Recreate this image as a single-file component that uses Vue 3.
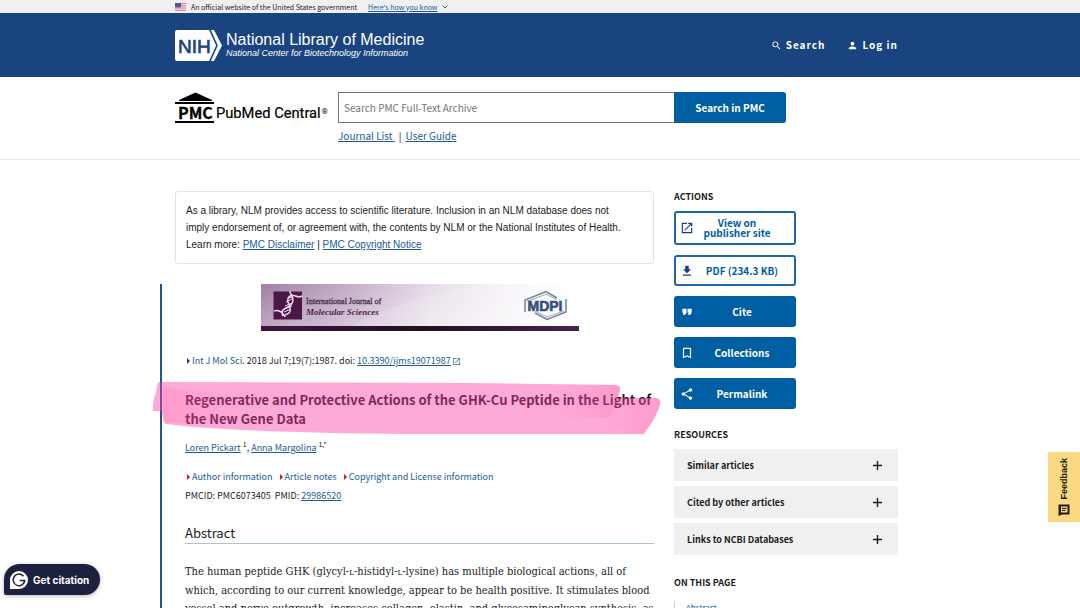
<script setup>
const articleTools = ['Author information', 'Article notes', 'Copyright and License information']
const resources = ['Similar articles', 'Cited by other articles', 'Links to NCBI Databases']
</script>

<template>
  <div class="page">
    <div class="gov">
      <div class="wrap gov-row">
        <svg class="flag" viewBox="0 0 11 8" aria-hidden="true">
          <rect width="11" height="8" fill="#f3dcdf" />
          <path d="M0 .6H11M0 2.8H11M0 5H11M0 7.3H11" stroke="#dd7686" stroke-width="1" />
          <rect width="6" height="4.4" fill="#4c5c9c" />
        </svg>
        <span>An official website of the United States government</span>
        <a href="#" class="know">Here's how you know</a>
        <svg class="chev" viewBox="0 0 6 4" aria-hidden="true"><path d="M.6 .6L3 3L5.4 .6" fill="none" stroke="#2c5f95" stroke-width="1" /></svg>
      </div>
    </div>

    <header class="nlm">
      <div class="wrap nlm-row">
        <a href="#" class="brand">
          <svg class="nih" viewBox="0 0 47 31" aria-label="NIH">
            <path d="M2 0H39L47 15.500L39 31H2Q0 31 0 29V2Q0 0 2 0Z" fill="#fff" />
            <path d="M34.500 -1L42 15.500L34.500 32" fill="none" stroke="#1a4480" stroke-width="1.600" />
            <text x="3" y="22.500" font-family="Liberation Sans, Arial, sans-serif" font-size="19" fill="#1a4480" stroke="#1a4480" stroke-width=".7">NIH</text>
          </svg>
          <span class="brand-text">
            <span class="brand-name">National Library of Medicine</span>
            <span class="brand-sub">National Center for Biotechnology Information</span>
          </span>
        </a>
        <nav class="user">
          <a href="#"><svg viewBox="0 0 24 24" class="ic"><path d="M15.500 14h-.79l-.28-.27A6.471 6.471 0 0 0 16 9.500 6.500 6.500 0 1 0 9.500 16c1.610 0 3.090-.59 4.230-1.570l.27.28v.79l5 4.990L20.490 19l-4.990-5zm-6 0C7.010 14 5 11.990 5 9.500S7.010 5 9.500 5 14 7.010 14 9.500 11.990 14 9.500 14z" fill="currentColor" /></svg>Search</a>
          <a href="#"><svg viewBox="0 0 24 24" class="ic"><path d="M12 12c2.210 0 4-1.790 4-4s-1.790-4-4-4-4 1.790-4 4 1.790 4 4 4zm0 2c-2.670 0-8 1.340-8 4v2h16v-2c0-2.660-5.330-4-8-4z" fill="currentColor" /></svg>Log in</a>
        </nav>
      </div>
    </header>

    <section class="pmc">
      <div class="wrap pmc-row">
        <a href="#" class="pmc-logo">
          <svg viewBox="0 0 154 33" aria-label="PMC PubMed Central">
            <path d="M20.500 .5L37 8V9H4V8Z" />
            <path d="M0 10H39V12H0ZM0 29H39V31H0Z" />
            <text x="3" y="26.500" font-family="Noto Sans CJK SC, sans-serif" font-weight="700" font-size="16" stroke="#000" stroke-width=".3">PMC</text>
            <text x="41" y="26" font-family="Roboto, sans-serif" font-size="14.700" stroke="#000" stroke-width=".2">PubMed Central</text>
            <text x="146.500" y="21.500" font-family="Roboto, sans-serif" font-size="8">®</text>
          </svg>
        </a>
        <form class="search" @submit.prevent>
          <div class="search-row">
            <input type="text" aria-label="Search PMC Full-Text Archive" placeholder="Search PMC Full-Text Archive" />
            <button type="submit">Search in PMC</button>
          </div>
          <div class="search-links"><a href="#">Journal List&nbsp;</a><span>|</span><a href="#">User Guide</a></div>
        </form>
      </div>
    </section>

    <div class="wrap body">
      <main>
        <div class="notice">
          As a library, NLM provides access to scientific literature. Inclusion in an NLM database does not<br />
          imply endorsement of, or agreement with, the contents by NLM or the National Institutes of Health.<br />
          Learn more: <a href="#">PMC Disclaimer</a> | <a href="#">PMC Copyright Notice</a>
        </div>

        <article>
          <svg class="journal" viewBox="0 0 318 47" aria-label="International Journal of Molecular Sciences, MDPI">
            <defs>
              <linearGradient id="jbg"><stop offset="0" stop-color="#a080a4" /><stop offset=".3" stop-color="#c5b0c8" /><stop offset=".55" stop-color="#e6dce8" /><stop offset=".8" stop-color="#f7f3f8" /><stop offset="1" stop-color="#fff" /></linearGradient>
              <linearGradient id="jtop" x2="0" y2="1"><stop offset="0" stop-color="#fff" stop-opacity="0" /><stop offset="1" stop-color="#fff" stop-opacity=".3" /></linearGradient>
              <linearGradient id="jbar"><stop offset="0" stop-color="#3d1440" /><stop offset=".5" stop-color="#22101f" /><stop offset="1" stop-color="#4a2050" /></linearGradient>
            </defs>
            <rect width="308" height="42" fill="url(#jbg)" />
            <path d="M90 42Q150 10 230 0H318V42Z" fill="#fff" opacity=".15" />
            <rect width="308" height="42" fill="url(#jtop)" />
            <rect y="42" width="318" height="5" fill="url(#jbar)" />
            <rect x="12.500" y="7.500" width="28.500" height="28" fill="#4b1749" />
            <path d="M13 27C19 25 22 29 24 33M22 32C17 22 32 26 32 16C32 11 28 9 29 7M24 31C37 27 21 17 29 12C33 9 36 15 41 12" fill="none" stroke="#eadcea" stroke-width="1.500" />
            <path d="M23 28L30 25M23 25L31 22M24 22L31 19M25 18L31 15M27 14L32 13" stroke="#eadcea" stroke-width="1" />
            <g font-family="Liberation Serif, serif" fill="#4d2450">
              <text x="45" y="20" font-size="8" fill="#453348" stroke="#453348" stroke-width=".3">International Journal of</text>
              <text x="45" y="30.500" font-size="9" font-weight="700" font-style="italic">Molecular Sciences</text>
            </g>
            <g fill="none" stroke="#71829d">
              <path d="M264 28V16L285 7.500L296 14" stroke-width="1.500" /><path d="M266 17.500L285 10L296 16" stroke-width=".7" />
              <path d="M305 15V28L286 35.500L274 29" stroke-width="1.500" /><path d="M303 27L286 33L274 27" stroke-width=".7" />
            </g>
            <text x="266.500" y="27" font-family="Liberation Sans, sans-serif" font-weight="700" font-size="14" fill="#34527d" stroke="#34527d" stroke-width=".6">MDPI</text>
          </svg>

          <p class="cite"><i class="tri blue"></i><a href="#" class="plain">Int J Mol Sci</a>. 2018 Jul 7;19(7):1987. doi: <a href="#">10.3390/ijms19071987</a><svg class="ext" viewBox="0 0 24 24"><path d="M19 19H5V5h7V3H3v18h18v-9h-2v7zM14 3v2h3.590l-9.830 9.830 1.410 1.410L19 6.410V10h2V3h-7z" fill="#2a69a8" /></svg></p>

          <div class="title">
            <h1>Regenerative and Protective Actions of the GHK-Cu Peptide in the Light of the New Gene Data</h1>
            <svg class="marker" viewBox="0 0 509 54" aria-hidden="true">
              <defs>
                <linearGradient id="m1"><stop offset="0" stop-color="#ff5f9c" stop-opacity="0" /><stop offset="1" stop-color="#ff5f9c" stop-opacity=".2" /></linearGradient>
                <linearGradient id="m2"><stop offset="0" stop-color="#ff5f9c" stop-opacity=".2" /><stop offset="1" stop-color="#ff5f9c" stop-opacity="0" /></linearGradient>
              </defs>
              <path d="M6 1L318 2L464 4Q469 5 468 9L466 17L504 17Q509 18 508 23C505 35 498 44 492 53H250C150 52 60 49 14 43Q11 42 11 37L10 30H1C0 20 4 14 6 1Z" fill="#fc39a5" fill-opacity=".43" />
              <path d="M400 3L464 4Q469 5 467 12C463 20 461 33 455 37H400Z" fill="url(#m1)" />
              <path d="M450 37L466 17L504 17Q509 18 508 23C505 35 498 44 492 53H450Z" fill="url(#m1)" />
              <path d="M11 8Q14 4 24 8L90 14V42H14L11 36Z" fill="url(#m2)" />
            </svg>
          </div>

          <p class="authors"><a href="#">Loren Pickart</a> <sup>1</sup>, <a href="#">Anna Margolina</a> <sup>1,*</sup></p>
          <div class="tools"><a v-for="t in articleTools" :key="t" href="#"><i class="tri red"></i>{{ t }}</a></div>
          <p class="ids">PMCID: PMC6073405 &nbsp;PMID: <a href="#">29986520</a></p>
          <h2>Abstract</h2>
          <p class="abstract">The human peptide GHK (glycyl-<small>L</small>-histidyl-<small>L</small>-lysine) has multiple biological actions, all of<br />which, according to our current knowledge, appear to be health positive. It stimulates blood<br />vessel and nerve outgrowth, increases collagen, elastin, and glycosaminoglycan synthesis, as</p>
        </article>
      </main>

      <aside>
        <h3>ACTIONS</h3>
        <div class="actions">
          <a href="#" class="btn outline tall"><svg viewBox="0 0 24 24"><path d="M19 19H5V5h7V3H3v18h18v-9h-2v7zM14 3v2h3.590l-9.830 9.830 1.410 1.410L19 6.410V10h2V3h-7z" /></svg><span>View on publisher site</span></a>
          <a href="#" class="btn outline"><svg viewBox="0 0 24 24"><path d="M19 9h-4V3H9v6H5l7 7 7-7zM5 18v2h14v-2H5z" /></svg><span>PDF (234.3 KB)</span></a>
          <button class="btn"><svg viewBox="0 0 24 24"><path d="M18.620 18h-5.240l2-4H13V6h8v7.240L18.620 18zM8.620 18H3.380l2-4H3V6h8v7.240L8.620 18z" transform="translate(1.500 1) scale(.88)" /></svg><span>Cite</span></button>
          <button class="btn"><svg viewBox="0 0 24 24"><path d="M17 3H7c-1.100 0-2 .9-2 2v16l7-3 7 3V5c0-1.100-.9-2-2-2zm0 15l-5-2.180L7 18V5h10v13z" /></svg><span>Collections</span></button>
          <button class="btn"><svg viewBox="0 0 24 24"><path d="M18 16.080c-.76 0-1.440.3-1.960.77L8.910 12.700c.05-.23.09-.46.09-.7s-.04-.47-.09-.7l7.050-4.110c.54.5 1.250.81 2.040.81 1.660 0 3-1.340 3-3s-1.340-3-3-3-3 1.340-3 3c0 .24.04.47.09.7L8.040 9.810C7.500 9.310 6.790 9 6 9c-1.660 0-3 1.340-3 3s1.340 3 3 3c.79 0 1.500-.31 2.040-.81l7.120 4.160c-.05.21-.08.43-.08.65 0 1.610 1.310 2.920 2.920 2.920s2.920-1.310 2.920-2.920-1.310-2.920-2.920-2.920z" /></svg><span>Permalink</span></button>
        </div>
        <h3>RESOURCES</h3>
        <div class="accordion">
          <button v-for="r in resources" :key="r">{{ r }}<svg viewBox="0 0 9 9"><path d="M4.500 0V9M0 4.500H9" stroke="#1b1b1b" stroke-width="1.400" /></svg></button>
        </div>
        <h3>ON THIS PAGE</h3>
        <nav class="toc"><a href="#">Abstract</a></nav>
      </aside>
    </div>

    <button class="feedback">
      <span>Feedback</span>
      <svg viewBox="0 0 12 12"><path d="M.500 .5H11.500V10.500H4L.500 12Z" fill="#201a10" /><path d="M3 2.500H9.500V8.500H3Z" fill="#fbd983" /><path d="M4 4.500H8.500M4 6.500H7.500" stroke="#201a10" stroke-width="1" /></svg>
    </button>
    <button class="getcite">
      <svg viewBox="0 0 18 18"><path d="M0 18V9A9 9 0 1 1 9 18Z" fill="#fff" /><path d="M13.500 5.200A5.800 5.800 0 1 0 14.800 9.400H9.800M14.800 9.400L13.500 12.600" fill="none" stroke="#1c2140" stroke-width="1.500" /></svg>
      Get citation
    </button>
  </div>
</template>

<style>
body { margin: 0; background: #fff; }
</style>

<style scoped>
* { box-sizing: border-box; }
.page { position: relative; height: 100vh; overflow: hidden; font-family: "Noto Sans CJK SC", sans-serif; font-size: 10px; line-height: 14px; color: #1b1b1b; }
a { color: #1a5a96; text-underline-offset: 1px; }
p, h1, h2, h3 { margin: 0; }
button { font-family: inherit; border: 0; cursor: pointer; }
.wrap { max-width: 730px; margin: 0 auto; padding-right: 7px; }
.gov { background: #f0f0f0; }
.gov-row { display: flex; align-items: center; height: 13px; font-size: 7px; line-height: 12px; }
.flag { width: 11px; height: 8px; margin-right: 5px; }
.know { margin-left: 11px; }
.chev { width: 6px; height: 4px; margin-left: 5px; }
.nlm { background: #1a4480; }
.nlm-row { display: flex; justify-content: space-between; align-items: center; height: 64px; }
.brand { display: flex; align-items: center; gap: 4px; color: #fff; text-decoration: none; font-family: "Liberation Sans", Arial, sans-serif; }
.nih { width: 47px; height: 31px; }
.brand-text { display: flex; flex-direction: column; }
.brand-name { font-size: 16px; line-height: 16px; }
.brand-sub { font-size: 9px; line-height: 11px; font-style: italic; }
.user { display: flex; gap: 22px; font-size: 10px; font-weight: 700; }
.user a { display: flex; align-items: center; gap: 4px; color: #fff; text-decoration: none; letter-spacing: 1px; }
.ic { width: 11px; height: 11px; }
.pmc { border-bottom: 1px solid #e6e6e6; }
.pmc-row { display: flex; gap: 9px; height: 82px; padding-top: 15px; }
.pmc-logo { width: 154px; }
.pmc-logo svg { display: block; width: 154px; height: 33px; }
.search { width: 448px; }
.search-row { display: flex; height: 31px; }
.search input { flex: 1; min-width: 0; border: 1px solid #71767a; border-right: 0; padding: 0 5px; font-family: inherit; font-size: 10px; }
.search input::placeholder { color: #757575; opacity: 1; }
.search button { width: 112px; background: #005ea2; color: #fff; font-weight: 700; font-size: 10px; border-radius: 0 3px 3px 0; }
.search-links { display: flex; gap: 4px; margin-top: 6px; }
.body { display: flex; gap: 20px; padding-top: 31px; }
main { flex: 1; min-width: 0; }
.notice { border: 1px solid #ecdfd3; border-radius: 3px; padding: 10px; font: 10px/17px "Liberation Sans", Arial, sans-serif; white-space: nowrap; }
article { margin: 20px 0 0 -15px; border-left: 2px solid #20558a; padding-left: 23px; }
.journal { display: block; width: 318px; height: 47px; margin: 0 auto; }
.cite { margin-top: 23px; font-size: 9px; }
.plain, .tools a { text-decoration: none; }
.tri { display: inline-block; border: 3px solid transparent; border-right: 0; margin: 0 2px; }
.blue { border-left-color: #1a4480; }
.red { border-left-color: #d8101f; }
.ext { width: 9px; height: 9px; margin-left: 1px; vertical-align: -2px; }
.title { position: relative; margin-top: 22px; }
h1 { font-size: 13px; line-height: 19px; font-weight: 700; }
.marker { position: absolute; left: -33px; top: -9px; width: 509px; height: 54px; }
.authors { margin-top: 13px; font-size: 9px; }
sup { font-size: 7px; line-height: 0; }
.tools { display: flex; gap: 5px; margin-top: 15px; font-size: 9px; }
.ids { margin-top: 5px; font-size: 9px; }
h2 { margin-top: 20px; font-size: 13px; line-height: 20px; font-weight: 400; border-bottom: 1px solid #a9c3d2; }
.abstract { margin-top: 19px; font: 11px/18px "DejaVu Serif Condensed", "DejaVu Serif", serif; white-space: nowrap; }
.abstract small { font-size: 8px; }
aside { width: 224px; }
h3 { font-size: 9px; line-height: 12px; font-weight: 700; }
.actions { display: flex; flex-direction: column; gap: 10px; width: 122px; margin: 8px 0 20px; }
.btn { display: flex; align-items: center; height: 31px; padding: 0 6px; border-radius: 3px; background: #005ea2; color: #fff; font-size: 10px; font-weight: 700; line-height: 10px; text-decoration: none; }
.btn svg { width: 14px; height: 14px; fill: currentColor; flex: none; }
.btn span { flex: 1; text-align: center; }
.outline { background: #fff; border: 2px solid #1f68a8; padding: 0 4px; color: #005ea2; }
.outline svg { fill: #1a3f80; }
.tall { height: 34px; }
.tall span { padding: 0 18px 0 8px; }
.accordion { display: flex; flex-direction: column; gap: 5px; margin: 8px 0 22px; }
.accordion button { display: flex; justify-content: space-between; align-items: center; height: 32px; padding: 0 16px 0 13px; background: #f0f0f0; color: #1b1b1b; font-size: 9px; font-weight: 700; }
.accordion svg { width: 9px; height: 9px; }
.toc { margin-top: 12px; padding-left: 11px; border-left: 1px solid #c8d3da; font-size: 8px; }
.toc a { text-decoration: none; }
.feedback { position: absolute; right: 0; top: 452px; width: 32px; height: 70px; padding: 0; display: flex; flex-direction: column; align-items: center; justify-content: center; gap: 4px; background: #fbd983; color: #201a10; font: 700 9px "Liberation Sans", Arial, sans-serif; }
.feedback span { writing-mode: vertical-rl; transform: rotate(180deg); }
.feedback svg { width: 12px; height: 12px; }
.getcite { position: absolute; left: 4px; bottom: 13px; display: flex; align-items: center; gap: 5px; width: 96px; height: 31px; padding: 0 6px; background: #1c2140; color: #fff; border-radius: 16px 16px 16px 2px; font: 700 10px Inter, sans-serif; white-space: nowrap; box-shadow: 0 1px 4px rgba(0, 0, 0, .3); }
.getcite svg { width: 18px; height: 18px; flex: none; }
</style>
